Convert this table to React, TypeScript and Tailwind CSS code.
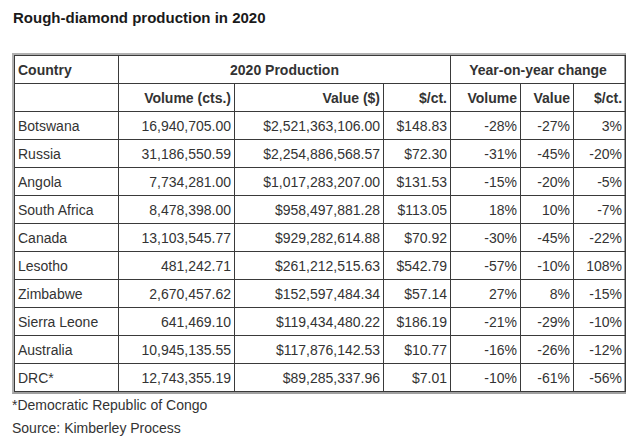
const rows: string[][] = [
  ["Botswana", "16,940,705.00", "$2,521,363,106.00", "$148.83", "-28%", "-27%", "3%"],
  ["Russia", "31,186,550.59", "$2,254,886,568.57", "$72.30", "-31%", "-45%", "-20%"],
  ["Angola", "7,734,281.00", "$1,017,283,207.00", "$131.53", "-15%", "-20%", "-5%"],
  ["South Africa", "8,478,398.00", "$958,497,881.28", "$113.05", "18%", "10%", "-7%"],
  ["Canada", "13,103,545.77", "$929,282,614.88", "$70.92", "-30%", "-45%", "-22%"],
  ["Lesotho", "481,242.71", "$261,212,515.63", "$542.79", "-57%", "-10%", "108%"],
  ["Zimbabwe", "2,670,457.62", "$152,597,484.34", "$57.14", "27%", "8%", "-15%"],
  ["Sierra Leone", "641,469.10", "$119,434,480.22", "$186.19", "-21%", "-29%", "-10%"],
  ["Australia", "10,945,135.55", "$117,876,142.53", "$10.77", "-16%", "-26%", "-12%"],
  ["DRC*", "12,743,355.19", "$89,285,337.96", "$7.01", "-10%", "-61%", "-56%"],
];

const widths = ["w-[104px]", "w-[116px]", "w-[149px]", "w-[67px]", "w-[70px]", "w-[53px]", "w-[52px]"];

const cell = "border border-[#3a3a3a] px-[3px] h-[28px] p-0 leading-none";

export default function App() {
  return (
    <div className="w-[640px] h-[447px] bg-white text-[#333] font-['Liberation_Sans',Arial,sans-serif] overflow-hidden">
      <h1 className="pl-[13px] pt-[7px] text-[15px] font-bold text-[#1a1a1a] leading-[22px]">
        Rough-diamond production in 2020
      </h1>
      <div className="ml-[12px] mt-[24px] w-[614px] border-2 border-[#b0b0b0] border-r-[#a0a0a0] border-b-[#a0a0a0]">
        <table className="w-full border-collapse table-fixed text-[14px]">
          <colgroup>
            {widths.map((w, i) => (
              <col key={i} className={w} />
            ))}
          </colgroup>
          <thead>
            <tr>
              <th className={`${cell} text-left font-bold`}>Country</th>
              <th colSpan={3} className={`${cell} text-center font-bold`}>
                2020 Production
              </th>
              <th colSpan={3} className={`${cell} text-center font-bold`}>
                Year-on-year change
              </th>
            </tr>
            <tr>
              <th className={cell}></th>
              <th className={`${cell} text-right font-bold`}>Volume (cts.)</th>
              <th className={`${cell} text-right font-bold`}>Value ($)</th>
              <th className={`${cell} text-right font-bold`}>$/ct.</th>
              <th className={`${cell} text-right font-bold`}>Volume</th>
              <th className={`${cell} text-right font-bold`}>Value</th>
              <th className={`${cell} text-right font-bold`}>$/ct.</th>
            </tr>
          </thead>
          <tbody>
            {rows.map((r) => (
              <tr key={r[0]}>
                {r.map((v, i) => (
                  <td key={i} className={`${cell} ${i === 0 ? "text-left" : "text-right"}`}>
                    {v}
                  </td>
                ))}
              </tr>
            ))}
          </tbody>
        </table>
      </div>
      <p className="pl-[12px] text-[14px] leading-[23px]">*Democratic Republic of Congo</p>
      <p className="pl-[12px] text-[14px] leading-[23px]">Source: Kimberley Process</p>
    </div>
  );
}
